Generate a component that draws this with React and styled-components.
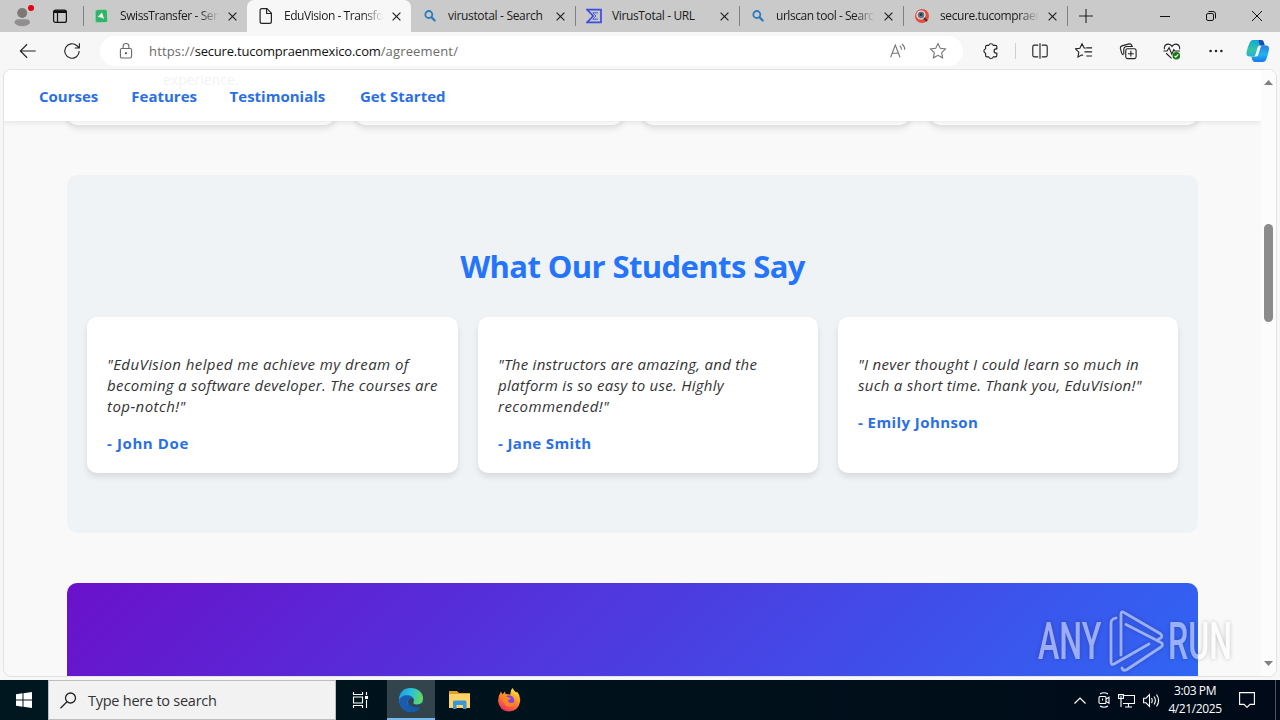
import styled, { createGlobalStyle, css } from "styled-components";

const theme = {
  fonts: `"Open Sans", "Noto Sans", sans-serif`,
  colors: {
    strip: "#cacaca",
    toolbar: "#f7f7f7",
    page: "#f9f9f9",
    section: "#f0f3f6",
    blue: "#2575fc",
    text: "#333",
  },
};

const tabs = [
  { title: "SwissTransfer - Sen", icon: "swiss", spacing: "-0.42px", fade: true },
  { title: "EduVision - Transfo", icon: "file", spacing: "-0.45px", fade: true, active: true },
  { title: "virustotal - Search", icon: "search", spacing: "-0.32px" },
  { title: "VirusTotal - URL", icon: "virustotal", spacing: "-0.36px" },
  { title: "urlscan tool - Searc", icon: "search", spacing: "-0.45px", fade: true },
  { title: "secure.tucompraen", icon: "urlscan", spacing: "-0.4px", fade: true },
];

const links = [
  { label: "Courses", width: 59 },
  { label: "Features", width: 65 },
  { label: "Testimonials", width: 97 },
  { label: "Get Started", width: 86 },
];

const testimonials = [
  {
    lines: [
      { text: '"EduVision helped me achieve my dream of', spacing: 0.42 },
      { text: "becoming a software developer. The courses are", spacing: 0.28 },
      { text: 'top-notch!"', spacing: 0.45 },
    ],
    author: "- John Doe",
    spacing: 0.6,
  },
  {
    lines: [
      { text: '"The instructors are amazing, and the', spacing: 0.27 },
      { text: "platform is so easy to use. Highly", spacing: 0.27 },
      { text: 'recommended!"', spacing: 0.46 },
    ],
    author: "- Jane Smith",
    spacing: 0.35,
  },
  {
    lines: [
      { text: '"I never thought I could learn so much in', spacing: 0.3 },
      { text: 'such a short time. Thank you, EduVision!"', spacing: 0.28 },
    ],
    author: "- Emily Johnson",
    spacing: 0.42,
  },
];

export default function App() {
  return (
    <>
      <GlobalStyle />
      <Desktop>
        <TabStrip />
        <Toolbar />
        <Viewport>
          <Page />
          <Scrollbar />
        </Viewport>
        <Taskbar />
        <Watermark />
      </Desktop>
    </>
  );
}

function TabStrip() {
  return (
    <TabStripStyled>
      <StripTools>
        <svg width="18" height="22" viewBox="0 0 18 22" overflow="visible">
          <circle cx="8.2" cy="8" r="5" fill="#7c7876" />
          <path d="M0.5 18.2q0-4 3.500-4h8.500q3.500 0 3.500 4q-3 3-7.800 3t-7.700-3z" fill="#928e8c" />
          <circle cx="17" cy="3" r="3" fill="#e3000f" />
        </svg>
        <svg width="16" height="16" viewBox="0 0 16 16" fill="none" stroke="#111" strokeWidth="1.2">
          <rect x="1.600" y="2.100" width="12.800" height="12.300" rx="2" />
          <path d="M2 3.200h12M2 4.300h12" strokeWidth="1.600" />
          <path d="M5.500 4.500v9.500" />
        </svg>
      </StripTools>
      {tabs.map((tab, i) => (
        <Tab key={tab.title} $active={tab.active} $line={i !== 1 && i !== 2}>
          <TabIcon name={tab.icon} />
          <TabTitle $spacing={tab.spacing} $fade={tab.fade}>{tab.title}</TabTitle>
          <svg width="9" height="9" viewBox="0 0 9 9" stroke="#222" strokeWidth="1.2">
            <path d="M0.600 0.600l7.800 7.800M8.400 0.600l-7.800 7.800" />
          </svg>
        </Tab>
      ))}
      <NewTab>
        <svg width="14" height="14" viewBox="0 0 14 14" stroke="#222" strokeWidth="1.1">
          <path d="M7 0v14M0 7h14" />
        </svg>
      </NewTab>
      <WindowButtons>
        <svg width="10" height="10" viewBox="0 0 10 10" stroke="#111" strokeWidth="1"><path d="M0 5.500h10" /></svg>
        <svg width="10" height="10" viewBox="0 0 10 10" fill="none" stroke="#111" strokeWidth="1">
          <rect x="0.500" y="2.500" width="7" height="7" rx="1.500" />
          <path d="M2.500 0.500h4.500q2.500 0 2.500 2.500v4.500" />
        </svg>
        <svg width="10" height="10" viewBox="0 0 10 10" stroke="#111" strokeWidth="1"><path d="M0 0l10 10M10 0l-10 10" /></svg>
      </WindowButtons>
    </TabStripStyled>
  );
}

function TabIcon({ name }) {
  if (name === "swiss")
    return (
      <svg width="16" height="16" viewBox="0 0 16 16">
        <path d="M1 2l11-1 2 13-11 1q-2 0-2-2z" fill="#7fd3a0" />
        <rect x="2" y="2" width="11" height="12" rx="1.500" fill="#33b469" />
        <path d="M3.800 9l4.200-4.500 2 6.500-2.500-1.500z" fill="#fff" />
      </svg>
    );
  if (name === "file")
    return (
      <svg width="16" height="18" viewBox="0 0 16 18" fill="none" stroke="#222" strokeWidth="1.200" strokeLinejoin="round">
        <path d="M4 1.600h5l4.400 4.600v8.300q0 1.900-1.900 1.900h-7.500q-1.900 0-1.900-1.900v-11q0-1.900 1.900-1.900z" />
        <path d="M8.600 1.800v4.700h4.700" />
      </svg>
    );
  if (name === "search")
    return (
      <svg width="16" height="16" viewBox="0 0 16 16" fill="none" stroke="#2b7ac0" strokeWidth="1.800" strokeLinecap="round">
        <circle cx="6.800" cy="6.500" r="3.500" />
        <path d="M9.500 9.200l3.200 3.300" strokeWidth="2.200" />
      </svg>
    );
  if (name === "virustotal")
    return (
      <svg width="16" height="16" viewBox="0 0 16 16" fill="none" stroke="#3b4ee0" strokeWidth="1.700">
        <path d="M1 1.600h14v12.800h-14l6.200-6.400z" />
        <path d="M12 4.800h-5.200l3.200 3.200-3.200 3.200h5.200" strokeWidth="0.900" />
      </svg>
    );
  return (
    <svg width="16" height="16" viewBox="0 0 16 16">
      <circle cx="8" cy="8" r="7" fill="#e8493f" />
      <circle cx="7" cy="7" r="4" fill="#5b7888" stroke="#f5efee" strokeWidth="1.200" />
      <circle cx="7" cy="6.600" r="1.500" fill="#243b45" />
      <path d="M10 10l3 3" stroke="#43302f" strokeWidth="1.800" />
    </svg>
  );
}

function Toolbar() {
  return (
    <ToolbarStyled>
      <ToolSlot $w={48}>
        <Icon>
          <path d="M1.500 10h17M9 2.500l-7.500 7.500 7.500 7.500" />
        </Icon>
      </ToolSlot>
      <ToolSlot $w={40}>
        <Icon>
          <path d="M18 10a8 8 0 1 1-2.500-5.800l2.500 2.300M18.200 1.500v5.200h-5.200" />
        </Icon>
      </ToolSlot>
      <AddressBar>
        <Icon $color="#6a6a6a">
          <rect x="3.800" y="7.200" width="12.400" height="10.600" rx="1.600" />
          <path d="M6.800 7v-2.200a3.200 3.200 0 0 1 6.400 0v2.200" />
          <circle cx="10" cy="12.400" r="0.700" fill="#6a6a6a" />
        </Icon>
        <Url>
          https://<b>secure.tucompraenmexico.com</b>/agreement/
        </Url>
        <Icon $color="#777">
          <path d="M1.800 17l5.200-13.500 5.200 13.500M3.800 12.500h6.400" />
          <path d="M11.800 4.200q2.200 1.500 2.200 4.500M14.300 2.300q3.200 2.300 3.200 6.400" />
        </Icon>
        <Icon $color="#777">
          <path d="M10 1.800l2.500 5.200 5.800.8-4.200 4 1 5.800-5.100-2.800-5.100 2.800 1-5.800-4.200-4 5.800-.8z" />
        </Icon>
      </AddressBar>
      <ToolSlot $w={44}>
        <Icon>
          <path
            d="M5.500 3.800h2a2.600 2.600 0 0 1 5 0h2.500q1.500 0 1.500 1.500v2.400h-.8a2.300 2.300 0 0 0 0 4.600h.8v2.700q0 1.500-1.500 1.500h-2.500a2.600 2.600 0 0 1-5 0h-2q-1.500 0-1.500-1.500v-2.500a2.600 2.600 0 0 1 0-5v-2.200q0-1.500 1.500-1.500z"
            strokeLinejoin="round"
          />
        </Icon>
      </ToolSlot>
      <Divider />
      <ToolSlot $w={44}>
        <Icon>
          <path d="M8 3.500h-4.300q-1.700 0-1.700 1.700v9.600q0 1.700 1.700 1.700h4.300M12 3.500h4.300q1.700 0 1.700 1.700v9.600q0 1.700-1.700 1.700h-4.300M10 1.500v17" />
        </Icon>
      </ToolSlot>
      <ToolSlot $w={44}>
        <Icon>
          <path d="M11.800 6.800l-1.600-.1-2.400-4.700-2.400 4.900-5 .7 3.800 3.700-.9 5.400 4.500-2.500 1.200.7M12.500 6.500h6.500M10.500 11h8.500M12.500 15.500h6.500" />
        </Icon>
      </ToolSlot>
      <ToolSlot $w={44}>
        <Icon>
          <rect x="7.500" y="7.500" width="11.500" height="11" rx="2" />
          <path d="M13.200 9.800v6.400M10 13h6.400M4.800 14.300q-1.500-.5-1.900-2.200l-1.400-5q-.4-2.200 1.700-2.800l8-2.200q2.200-.4 2.900 1.500l.2.900M5.300 13.500v-5q0-3.500 3.500-3.500h6.700" />
        </Icon>
      </ToolSlot>
      <ToolSlot $w={44}>
        <Icon>
          <path d="M1.500 8q-.4-5 3.900-5.600 3-.2 4.600 2.500 1.600-2.700 4.600-2.500 4.300.6 3.900 5.600M.5 10h4l2.300-3.700 3 7.200 2.200-5 1.200 1.500h5.600M3.500 12.500l6 5.800" />
          <circle cx="14.800" cy="15.200" r="4.200" fill="#137a13" stroke="none" />
          <path d="M12.800 15.500l1.400 1.300 2.700-3" stroke="#fff" />
        </Icon>
      </ToolSlot>
      <ToolSlot $w={44}>
        <Icon>
          <g fill="#222" stroke="none">
            <circle cx="4" cy="10" r="1.400" />
            <circle cx="10" cy="10" r="1.400" />
            <circle cx="16" cy="10" r="1.400" />
          </g>
        </Icon>
      </ToolSlot>
      <ToolSlot $w={40}>
        <svg width="24" height="24" viewBox="0 0 24 24">
          <defs>
            <linearGradient id="copLeft" x1="0" y1="0" x2="0" y2="1">
              <stop offset="0" stopColor="#12a5dc" />
              <stop offset="0.600" stopColor="#35c5a0" />
              <stop offset="1" stopColor="#2aaedd" />
            </linearGradient>
            <linearGradient id="copRight" x1="0" y1="0" x2="0" y2="1">
              <stop offset="0" stopColor="#2a7fe3" />
              <stop offset="0.550" stopColor="#23b3ee" />
              <stop offset="1" stopColor="#1479e8" />
            </linearGradient>
          </defs>
          <path d="M7 1h8q2 0 2.700 2l1 3.500h-5q-1.500 0-2 1.800l-2.400 7.700q-.5 1.500-2 1.500h-3.800q-3.500 0-3-4 1-6 3.500-10.500 1.200-2 3-2z" fill="url(#copLeft)" />
          <path d="M12.500 1h2.500q2 0 2.700 2l1 3.500h-4.200q-1.500-.5-2-5.500z" fill="#174fb8" />
          <path d="M17 23h-8q-2 0-2.700-2l-1-3.500h5q1.500 0 2-1.800l2.400-7.700q.5-1.500 2-1.500h3.300q3.500 0 3 4-1 6-3 10.500-1.200 2-3 2z" fill="url(#copRight)" />
        </svg>
      </ToolSlot>
    </ToolbarStyled>
  );
}

function Icon({ children, $color }) {
  return (
    <IconSvg $color={$color} viewBox="0 0 20 20">
      {children}
    </IconSvg>
  );
}

function Page() {
  return (
    <PageStyled>
      <Nav>
        <GhostText>experience.</GhostText>
        {links.map((link) => (
          <NavLink key={link.label} $width={link.width}>{link.label}</NavLink>
        ))}
      </Nav>
      <Content>
        <FeatureRow>
          <FeatureCard />
          <FeatureCard />
          <FeatureCard />
          <FeatureCard />
        </FeatureRow>
        <Testimonials>
          <h2>What Our Students Say</h2>
          <Cards>
            {testimonials.map((t) => (
              <Card key={t.author}>
                <Quote>
                  {t.lines.map((line) => (
                    <QuoteLine key={line.text} $spacing={line.spacing}>{line.text}</QuoteLine>
                  ))}
                </Quote>
                <Author $spacing={t.spacing}>{t.author}</Author>
              </Card>
            ))}
          </Cards>
        </Testimonials>
        <CallToAction />
      </Content>
    </PageStyled>
  );
}

function Scrollbar() {
  return (
    <ScrollbarStyled>
      <svg width="9" height="5" viewBox="0 0 9 5"><path d="M0 5l4.500-5 4.500 5z" fill="#808080" /></svg>
      <Thumb />
      <svg width="9" height="5" viewBox="0 0 9 5"><path d="M0 0l4.500 5 4.500-5z" fill="#808080" /></svg>
    </ScrollbarStyled>
  );
}

function Taskbar() {
  return (
    <TaskbarStyled>
      <TaskButton>
        <svg width="16" height="16" viewBox="0 0 16 16" fill="#fff">
          <path d="M0 2.200l6.500-.9v6.200h-6.500zM7.500 1.200l8.500-1.200v7.500h-8.500zM0 8.500h6.500v6.200l-6.500-.9zM7.500 8.500h8.500v7.500l-8.500-1.200z" />
        </svg>
      </TaskButton>
      <SearchBox>
        <svg width="17" height="17" viewBox="0 0 17 17" fill="none" stroke="#222" strokeWidth="1.300">
          <circle cx="10.500" cy="6" r="5" />
          <path d="M7 9.700l-6.500 6.500" />
        </svg>
        <span>Type here to search</span>
      </SearchBox>
      <TaskButton>
        <svg width="17" height="16" viewBox="0 0 17 16" fill="none" stroke="#fff" strokeWidth="1.100">
          <path d="M1.500 0v2.500h9v-2.500M1.500 16v-2.500h9v2.500M1.500 5h9v6h-9zM14.500 0v3M14.500 8v8" />
          <rect x="13.500" y="4.500" width="2" height="2" fill="#fff" />
        </svg>
      </TaskButton>
      <Pinned>
        <TaskButton $active>
          <svg width="24" height="24" viewBox="0 0 24 24">
            <defs>
              <linearGradient id="edgeTop" x1="0" y1="0.300" x2="1" y2="0.500">
                <stop offset="0" stopColor="#1d9de2" />
                <stop offset="0.500" stopColor="#2dc3d3" />
                <stop offset="1" stopColor="#65d957" />
              </linearGradient>
            </defs>
            <circle cx="12" cy="12" r="12" fill="#1373cf" />
            <path d="M0 11.500q.8-11.500 12-11.500 10.500.5 12 9.500.5 6.500-6 7-4.500 0-3.700-2.200 1.300-1.500.2-4-2-3.300-6.500-3.300-5.500.2-8 4.500z" fill="url(#edgeTop)" />
            <path d="M8.500 12q-1.500 8.500 6 11.500-8 1.500-12.500-5-3.500-8 3-10.300 5-1.200 8.500 2-4-1.500-5 1.800z" fill="#1a5bb0" />
            <path d="M9 13q1-3.500 4.500-3 2 1.800.8 4.300-.2 2.500 4 2.400 2.500-.2 4-1.200l2.500-1v3q-4 4.500-9.300 3.500-6.500-2-6.500-8z" fill="#33444c" />
            <path d="M9 14.500q4 6.500 12.500 4.200-3.500 5-8.500 5.300-5-3-4-9.500z" fill="#125ba8" />
          </svg>
        </TaskButton>
        <TaskButton>
          <svg width="22" height="18" viewBox="0 0 22 18">
            <path d="M0 0h8l2 2h11v4h-21z" fill="#dca223" />
            <path d="M0 3h21v14h-21z" fill="#fdd465" />
            <path d="M4 18v-7q0-1.500 1.500-1.500h10.500q1.500 0 1.500 1.500v7h-3.500v-4h-6.500v4z" fill="#3a96d8" />
          </svg>
        </TaskButton>
        <TaskButton>
          <svg width="24" height="24" viewBox="0 0 24 24">
            <defs>
              <linearGradient id="foxBody" x1="0.800" y1="0" x2="0.300" y2="1">
                <stop offset="0" stopColor="#fff04a" />
                <stop offset="0.400" stopColor="#ff9a22" />
                <stop offset="1" stopColor="#f02a5e" />
              </linearGradient>
            </defs>
            <path d="M1 13q0-5 3-9.500l1.500 3 2.500-3 .5 2.500 5 .5q-.5-4 2-6.500 1.500 3 4 4.500l.5-1q4 4.500 3 10.500-1.700 9-11 9.500-9.500-.5-11-10.500z" fill="url(#foxBody)" />
            <circle cx="12" cy="12.500" r="5.200" fill="#8046df" />
            <path d="M5 8q4-1 6.500 1.500l2.500.5q-.5 1.500-3 2 0 2.500 3 3 3 .3 4.500-1.800-1.500 5.500-6.500 5.500-6-1-7-10.700z" fill="#ff8423" />
          </svg>
        </TaskButton>
      </Pinned>
      <Tray>
        <svg width="12" height="7" viewBox="0 0 12 7" fill="none" stroke="#fff" strokeWidth="1.200"><path d="M0.500 6.500l5.500-5.500 5.500 5.500" /></svg>
        <svg width="12" height="16" viewBox="0 0 12 16" fill="none" stroke="#fff" strokeWidth="1.100">
          <rect x="1" y="4.500" width="7" height="7" rx="1" />
          <path d="M8 7l3-1.800v6l-3-1.800M2 2q4-2.500 8 0M2 14q4 2.500 8 0M4.500 6.500v2" />
        </svg>
        <svg width="17" height="15" viewBox="0 0 17 15" fill="none" stroke="#fff" strokeWidth="1.100">
          <path d="M5.500 2.500h11v8h-11.500M10.500 10.500v3.500M7 14h7M3 5.500v8.500M0.600 1.600h4.800v3.900h-4.800zM3 3v2" />
        </svg>
        <svg width="17" height="15" viewBox="0 0 17 15" fill="none" stroke="#fff" strokeWidth="1.100">
          <path d="M0.600 5.200h2.400l3.500-3.500v11.600l-3.500-3.500h-2.400zM8.500 5q1.500 2.500 0 5M11 3.500q2.800 4 0 8M13.500 1.500q4.200 6 0 12" />
        </svg>
        <Clock>
          <span>3:03 PM</span>
          <span>4/21/2025</span>
        </Clock>
        <svg width="16" height="16" viewBox="0 0 16 16" fill="none" stroke="#fff" strokeWidth="1.100"><path d="M0.600 0.600h14.800v11.800h-4.400l-3 3-3-3h-4.400z" /></svg>
      </Tray>
      <ShowDesktop />
    </TaskbarStyled>
  );
}

function Watermark() {
  return (
    <WatermarkStyled>
      <Word>ANY</Word>
      <svg width="56" height="62" viewBox="0 0 56 62" fill="none" stroke="#fff" strokeWidth="2.800" strokeLinejoin="round" strokeLinecap="round">
        <path d="M12 45v-41q0-3 3-1.500l36 21q3 2 1 4.500l-2.500 1" />
        <path d="M17 14.500l35 18q3 2 0 4.500l-34 22.500q-4 2-5-1.500" />
        <path d="M40 34l-35 20q-3 1.500-3-2v-39q0-4 5-5" />
      </svg>
      <Word>RUN</Word>
    </WatermarkStyled>
  );
}

const GlobalStyle = createGlobalStyle`
  * { box-sizing: border-box; }
  body {
    margin: 0;
    overflow: hidden;
    font-family: ${theme.fonts};
  }
  svg { flex: none; display: block; }
`;

const Desktop = styled.div`
  position: relative;
  width: 1280px;
  height: 720px;
  display: flex;
  flex-direction: column;
  background: ${theme.colors.toolbar};
  overflow: hidden;
`;

const TabStripStyled = styled.div`
  height: 32px;
  flex: none;
  display: flex;
  background: ${theme.colors.strip};
`;

const StripTools = styled.div`
  width: 83px;
  padding: 0 15px 0 14px;
  display: flex;
  align-items: center;
  justify-content: space-between;
`;

const Tab = styled.div`
  width: 164px;
  display: flex;
  align-items: center;
  padding: 0 10px 0 10px;
  border-left: 1px solid transparent;
  border-image: ${({ $line }) => ($line ? "linear-gradient(transparent 20%, #808080 20%, #808080 80%, transparent 80%) 1" : "none")};
  ${({ $active }) =>
    $active &&
    css`
      background: ${theme.colors.toolbar};
      border-radius: 7px 7px 0 0;
    `}
`;

const TabTitle = styled.span`
  width: 99px;
  margin: 0 9px 0 10px;
  white-space: nowrap;
  font-size: 12px;
  line-height: 18px;
  letter-spacing: ${({ $spacing }) => $spacing};
  color: #1b1b1b;
  ${({ $fade }) => $fade && "mask-image: linear-gradient(90deg, #000 80%, transparent);"}
`;

const NewTab = styled.div`
  width: 36px;
  display: flex;
  align-items: center;
  justify-content: center;
  border-left: 1px solid transparent;
  border-image: linear-gradient(transparent 20%, #808080 20%, #808080 80%, transparent 80%) 1;
`;

const WindowButtons = styled.div`
  margin-left: auto;
  width: 138px;
  display: flex;
  align-items: center;
  justify-content: space-around;
`;

const ToolbarStyled = styled.div`
  height: 38px;
  flex: none;
  display: flex;
  align-items: center;
  padding-left: 4px;
`;

const ToolSlot = styled.div`
  width: ${({ $w }) => $w}px;
  flex: none;
  display: flex;
  justify-content: center;
`;

const IconSvg = styled.svg`
  width: 18px;
  height: 18px;
  fill: none;
  stroke: ${({ $color }) => $color || "#222"};
  stroke-width: 1.25;
`;

const AddressBar = styled.div`
  width: 863px;
  height: 30px;
  margin: 0 6px 0 8px;
  padding: 0 16px 0 17px;
  display: flex;
  align-items: center;
  gap: 22px;
  border-radius: 15px;
  background: #fff;
`;

const Url = styled.span`
  flex: 1;
  margin-left: -8px;
  font-size: 13px;
  letter-spacing: 0.16px;
  color: #6b6b6b;

  b {
    font-weight: 400;
    letter-spacing: -0.19px;
    color: #111;
  }
`;

const Divider = styled.div`
  width: 1px;
  height: 16px;
  margin: 0 2px;
  background: #d0d0d0;
`;

const Viewport = styled.div`
  height: 608px;
  margin: -1px 3px 3px;
  flex: none;
  display: flex;
  border: 1px solid #e3e3e3;
  border-radius: 8px;
  background: ${theme.colors.page};
  overflow: hidden;
`;

const PageStyled = styled.div`
  width: 1257px;
  flex: none;
  overflow: hidden;
`;

const Nav = styled.nav`
  position: relative;
  z-index: 1;
  height: 51px;
  padding: 0 35px;
  display: flex;
  align-items: center;
  gap: 33.3px;
  background: #fff;
  box-shadow: 0 2px 5px rgba(0, 0, 0, 0.08);
`;

const GhostText = styled.span`
  position: absolute;
  left: 159px;
  top: 0;
  font-size: 14px;
  line-height: 20px;
  color: #f3f3f3;
`;

const NavLink = styled.a`
  width: ${({ $width }) => $width}px;
  white-space: nowrap;
  font-size: 15px;
  font-weight: 700;
  color: #2b6fe6;
`;

const Content = styled.div`
  padding: 0 63px;
`;

const FeatureRow = styled.div`
  display: grid;
  grid-template-columns: repeat(4, 1fr);
  gap: 20px;
  margin-top: -20px;
`;

const FeatureCard = styled.div`
  height: 24px;
  background: #fff;
  border-radius: 0 0 10px 10px;
  box-shadow: 0 4px 6px rgba(0, 0, 0, 0.1);
`;

const Testimonials = styled.section`
  height: 358px;
  margin-top: 50px;
  padding: 68px 20px 0;
  border-radius: 10px;
  background: ${theme.colors.section};

  h2 {
    height: 74px;
    margin: 0;
    text-align: center;
    font-size: 31px;
    line-height: 47px;
    letter-spacing: -0.6px;
    color: ${theme.colors.blue};
  }
`;

const Cards = styled.div`
  display: grid;
  grid-template-columns: 371px 340px 340px;
  gap: 20px;
`;

const Card = styled.div`
  height: 156px;
  padding: 37px 20px 0;
  border-radius: 10px;
  background: #fff;
  box-shadow: 0 4px 6px rgba(0, 0, 0, 0.1);
`;

const Quote = styled.p`
  margin: 0 0 16px;
  font-size: 15px;
  font-style: italic;
  line-height: 21px;
  color: ${theme.colors.text};
`;

const QuoteLine = styled.span`
  display: block;
  white-space: nowrap;
  letter-spacing: ${({ $spacing }) => $spacing}px;
`;

const Author = styled.div`
  font-size: 15px;
  font-weight: 700;
  line-height: 21px;
  letter-spacing: ${({ $spacing }) => $spacing}px;
  color: #2b6fe6;
`;

const CallToAction = styled.section`
  height: 320px;
  margin-top: 50px;
  border-radius: 10px;
  background: linear-gradient(135deg, #6a11cb, #2575fc);
`;

const ScrollbarStyled = styled.div`
  width: 15px;
  padding: 10px 1px 10px 0;
  display: flex;
  flex-direction: column;
  align-items: center;
  background: #fcfcfc;
`;

const Thumb = styled.div`
  width: 9px;
  height: 98px;
  margin: 139px 0 auto;
  flex: none;
  border-radius: 5px;
  background: #8b8b8b;
`;

const TaskbarStyled = styled.div`
  height: 40px;
  flex: none;
  display: flex;
  background: linear-gradient(90deg, #00171f, #00101b 60%, #000a18);
`;

const Pinned = styled.div`
  display: flex;
  gap: 1px;
  margin-left: 3px;
`;

const TaskButton = styled.div`
  width: 48px;
  display: flex;
  align-items: center;
  justify-content: center;
  ${({ $active }) =>
    $active &&
    css`
      background: #33444c;
      box-shadow: inset 0 -2px 0 #76b9ed;
    `}
`;

const SearchBox = styled.div`
  width: 288px;
  padding-left: 11px;
  display: flex;
  align-items: center;
  gap: 11px;
  border: 1px solid #bdbdbd;
  background: #f2f2f2;
  font-size: 14.5px;
  letter-spacing: -0.25px;
  color: #333;
`;

const Tray = styled.div`
  margin-left: auto;
  padding-right: 20px;
  display: flex;
  align-items: center;
  gap: 8px;

  svg:first-child {
    margin-right: 4px;
  }
`;

const Clock = styled.div`
  width: 56px;
  margin: 0 8px 0 -1px;
  display: flex;
  flex-direction: column;
  align-items: center;
  font-size: 12px;
  line-height: 18px;
  letter-spacing: -0.4px;
  white-space: nowrap;
  color: #fff;
`;

const ShowDesktop = styled.div`
  width: 5px;
  border-left: 1px solid #4a525c;
`;

const WatermarkStyled = styled.div`
  position: absolute;
  left: 1038px;
  top: 610px;
  height: 62px;
  display: flex;
  align-items: center;
  gap: 3px;
  opacity: 0.5;
  filter: drop-shadow(0 0 2px rgba(0, 0, 0, 0.45));
`;

const Word = styled.span`
  width: 64px;
  margin-right: 4px;
  padding-top: 1px;
  font-family: Roboto, sans-serif;
  font-size: 51px;
  font-weight: 500;
  line-height: 62px;
  color: #fff;
  transform: scaleX(0.63);
  transform-origin: left;
`;
